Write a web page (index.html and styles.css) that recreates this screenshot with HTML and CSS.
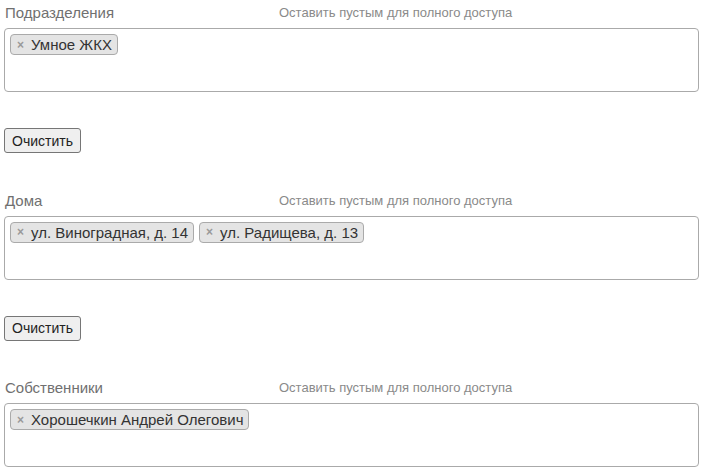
FILE: index.html
```html
<!DOCTYPE html>
<html lang="ru">
<head>
    <meta charset="UTF-8">
    <title>Доступ</title>
    <link rel="stylesheet" href="styles.css">
</head>
<body>
    <div class="form">
        <div class="field">
            <div class="field-head">
                <label class="field-label">Подразделения</label>
                <span class="field-hint">Оставить пустым для полного доступа</span>
            </div>
            <div class="select-box">
                <span class="tag"><span class="tag-remove">×</span>Умное ЖКХ</span>
            </div>
            <button class="clear-btn">Очистить</button>
        </div>

        <div class="field">
            <div class="field-head">
                <label class="field-label">Дома</label>
                <span class="field-hint">Оставить пустым для полного доступа</span>
            </div>
            <div class="select-box">
                <span class="tag"><span class="tag-remove">×</span>ул. Виноградная, д. 14</span>
                <span class="tag"><span class="tag-remove">×</span>ул. Радищева, д. 13</span>
            </div>
            <button class="clear-btn">Очистить</button>
        </div>

        <div class="field">
            <div class="field-head">
                <label class="field-label">Собственники</label>
                <span class="field-hint">Оставить пустым для полного доступа</span>
            </div>
            <div class="select-box">
                <span class="tag"><span class="tag-remove">×</span>Хорошечкин Андрей Олегович</span>
            </div>
        </div>
    </div>
</body>
</html>
```

FILE: styles.css
```css
body {
    margin: 0;
    font-family: "Liberation Sans", Arial, sans-serif;
    background: #fff;
}
.form {
    width: 695px;
    padding-left: 4px;
}
.field {
    display: flex;
    flex-direction: column;
    align-items: flex-start;
    margin-bottom: 34.5px;
}
.field:last-child {
    margin-bottom: 0;
}
.field-head {
    display: flex;
    align-items: center;
    height: 24px;
    margin-bottom: 4px;
    padding-top: 1px;
    box-sizing: border-box;
}
.field-label {
    width: 275px;
    padding-left: 1px;
    box-sizing: border-box;
    font-size: 15px;
    color: #707070;
}
.field-hint {
    font-size: 13px;
    color: #8a8a8a;
}
.select-box {
    width: 695px;
    height: 64px;
    box-sizing: border-box;
    border: 1px solid #aaa;
    border-radius: 4px;
    padding: 5px;
    display: flex;
    flex-wrap: wrap;
    align-content: flex-start;
    gap: 5px;
}
.tag {
    display: inline-flex;
    align-items: center;
    height: 21px;
    box-sizing: border-box;
    padding: 0 5px 0 6px;
    background: #e4e4e4;
    border: 1px solid #aaa;
    border-radius: 4px;
    font-size: 15px;
    color: #333;
}
.tag-remove {
    font-size: 12px;
    font-weight: bold;
    color: #999;
    margin-right: 7px;
}
.clear-btn {
    margin-top: 36px;
    width: 77px;
    height: 25px;
    padding: 0;
    font-family: "Liberation Sans", Arial, sans-serif;
    font-size: 14px;
    color: #222;
    background: #efefef;
    border: 1px solid #767676;
    border-radius: 3px;
}
```
